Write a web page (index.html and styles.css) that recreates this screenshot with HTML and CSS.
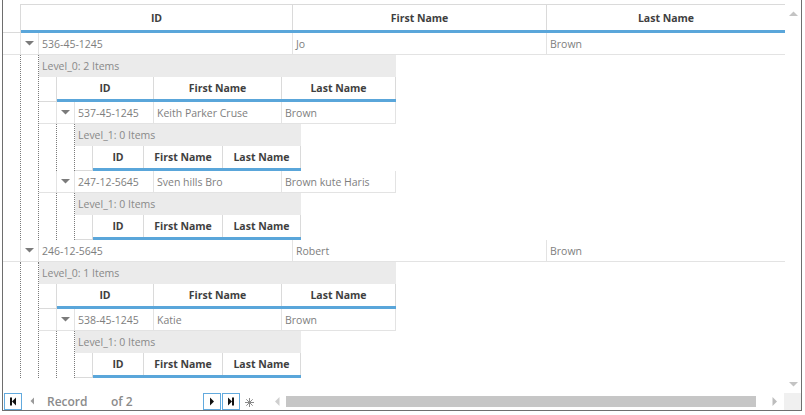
FILE: index.html
```html
<!DOCTYPE html>
<html>
<head>
<meta charset="utf-8">
<title>Grid</title>
<link rel="stylesheet" href="styles.css">
</head>
<body>
<div class="frame">
  <div class="upper">
    <div class="viewport">
      <div class="grid g0">
        <div class="hdr">
          <div class="rh-h"></div>
          <div class="hcols hcols0">
            <div class="h h0 id0">ID</div>
            <div class="h h0 fn0">First Name</div>
            <div class="h h0 ln0 last">Last Name</div>
          </div>
        </div>

        <div class="row">
          <div class="c rh"></div>
          <div class="c exp"><svg width="9" height="5" viewBox="0 0 9 5"><path d="M0 0H9L4.5 4.5Z" fill="#7b7b7b"/></svg></div>
          <div class="c idt0">536-45-1245</div>
          <div class="c fn0">Jo</div>
          <div class="c ln0 last">Brown</div>
        </div>
        <div class="detail">
          <div class="ind"><span></span><span></span></div>
          <div class="grid g1">
            <div class="grp">Level_0: 2 Items</div>
            <div class="hdr">
              <div class="rh-h"></div>
              <div class="hcols">
                <div class="h hn id1">ID</div>
                <div class="h hn fn1">First Name</div>
                <div class="h hn ln1">Last Name</div>
              </div>
            </div>
            <div class="row">
              <div class="c rh"></div>
              <div class="c exp"><svg width="9" height="5" viewBox="0 0 9 5"><path d="M0 0H9L4.5 4.5Z" fill="#7b7b7b"/></svg></div>
              <div class="c idt1">537-45-1245</div>
              <div class="c fn1">Keith Parker Cruse</div>
              <div class="c ln1">Brown</div>
            </div>
            <div class="detail">
              <div class="ind"><span></span><span></span></div>
              <div class="grid g2">
                <div class="grp">Level_1: 0 Items</div>
                <div class="hdr">
                  <div class="rh-h"></div>
                  <div class="hcols">
                    <div class="h hn id2">ID</div>
                    <div class="h hn fn2">First Name</div>
                    <div class="h hn ln2">Last Name</div>
                  </div>
                </div>
              </div>
            </div>
            <div class="row">
              <div class="c rh"></div>
              <div class="c exp"><svg width="9" height="5" viewBox="0 0 9 5"><path d="M0 0H9L4.5 4.5Z" fill="#7b7b7b"/></svg></div>
              <div class="c idt1">247-12-5645</div>
              <div class="c fn1">Sven hills Bro</div>
              <div class="c ln1">Brown kute Haris</div>
            </div>
            <div class="detail">
              <div class="ind"><span></span><span></span></div>
              <div class="grid g2">
                <div class="grp">Level_1: 0 Items</div>
                <div class="hdr">
                  <div class="rh-h"></div>
                  <div class="hcols">
                    <div class="h hn id2">ID</div>
                    <div class="h hn fn2">First Name</div>
                    <div class="h hn ln2">Last Name</div>
                  </div>
                </div>
              </div>
            </div>
          </div>
        </div>

        <div class="row">
          <div class="c rh"></div>
          <div class="c exp"><svg width="9" height="5" viewBox="0 0 9 5"><path d="M0 0H9L4.5 4.5Z" fill="#7b7b7b"/></svg></div>
          <div class="c idt0">246-12-5645</div>
          <div class="c fn0">Robert</div>
          <div class="c ln0 last">Brown</div>
        </div>
        <div class="detail">
          <div class="ind"><span></span><span></span></div>
          <div class="grid g1">
            <div class="grp">Level_0: 1 Items</div>
            <div class="hdr">
              <div class="rh-h"></div>
              <div class="hcols">
                <div class="h hn id1">ID</div>
                <div class="h hn fn1">First Name</div>
                <div class="h hn ln1">Last Name</div>
              </div>
            </div>
            <div class="row">
              <div class="c rh"></div>
              <div class="c exp"><svg width="9" height="5" viewBox="0 0 9 5"><path d="M0 0H9L4.5 4.5Z" fill="#7b7b7b"/></svg></div>
              <div class="c idt1">538-45-1245</div>
              <div class="c fn1">Katie</div>
              <div class="c ln1">Brown</div>
            </div>
            <div class="detail">
              <div class="ind"><span></span><span></span></div>
              <div class="grid g2">
                <div class="grp">Level_1: 0 Items</div>
                <div class="hdr">
                  <div class="rh-h"></div>
                  <div class="hcols">
                    <div class="h hn id2">ID</div>
                    <div class="h hn fn2">First Name</div>
                    <div class="h hn ln2">Last Name</div>
                  </div>
                </div>
              </div>
            </div>
          </div>
        </div>
      </div>
    </div>
    <div class="vscroll">
      <svg width="9" height="5" viewBox="0 0 9 5"><path d="M0 5H9L4.5 0.5Z" fill="#c4c4c4"/></svg>
      <svg width="9" height="5" viewBox="0 0 9 5"><path d="M0 0H9L4.5 4.5Z" fill="#c4c4c4"/></svg>
    </div>
  </div>
  <div class="bottom">
    <div class="nav">
      <div class="btn first">
        <svg width="8" height="9" viewBox="0 0 8 9"><rect x="1" y="0.5" width="2" height="8" fill="#111"/><path d="M7 0.5V8.5L3 4.5Z" fill="#111"/></svg>
      </div>
      <svg class="prev" width="4" height="8" viewBox="0 0 4 8"><path d="M4 0.5V7.5L0.5 4Z" fill="#9a9a9a"/></svg>
      <span class="rec">Record</span>
      <span class="of">of 2</span>
      <div class="btn">
        <svg width="5" height="9" viewBox="0 0 5 9"><path d="M0 0.5V8.5L4 4.5Z" fill="#111"/></svg>
      </div>
      <div class="btn last-btn">
        <svg width="7" height="9" viewBox="0 0 7 9"><path d="M0 0.5V8.5L4 4.5Z" fill="#111"/><rect x="4" y="0.5" width="2" height="8" fill="#111"/></svg>
      </div>
      <svg class="star" width="9" height="9" viewBox="0 0 9 9"><path d="M4.5 0V9M0 4.5H9M1.3 1.3L7.7 7.7M7.7 1.3L1.3 7.7" stroke="#8a8a8a" stroke-width="1"/></svg>
    </div>
    <div class="hscroll">
      <svg class="harr" width="5" height="9" viewBox="0 0 5 9"><path d="M4.5 0V9L0 4.5Z" fill="#cfcfcf"/></svg>
      <div class="thumb"></div>
      <svg class="harr r" width="5" height="9" viewBox="0 0 5 9"><path d="M0.5 0V9L5 4.5Z" fill="#bdbdbd"/></svg>
    </div>
    <div class="corner"></div>
  </div>
</div>
</body>
</html>
```

FILE: styles.css
```css
* { box-sizing: border-box; }
html, body { margin: 0; padding: 0; background: #fff; }
body {
  font-family: "Open Sans", "Liberation Sans", sans-serif;
  font-size: 10.5px;
  color: #7e7e7e;
}
svg { display: block; }

.frame {
  margin-left: 2px;
  width: 800px;
  height: 411px;
  border: 1px solid #6e6e6e;
  border-top: none;
  display: flex;
  flex-direction: column;
}
.upper { height: 392px; display: flex; }
.viewport { width: 782px; padding-top: 4px; overflow: hidden; }
.vscroll {
  width: 16px;
  display: flex;
  flex-direction: column;
  justify-content: space-between;
  align-items: center;
  padding: 11px 0 5px;
}

/* grid */
.grid { display: flex; flex-direction: column; }
.g1 { width: 357px; }
.g2 { width: 226px; }

.hdr { display: flex; }
.rh-h { width: 18px; flex: none; border-right: 1px solid #dadada; border-bottom: 1px solid #dadada; }
.hcols { display: flex; border-bottom: 3px solid #5aa6da; }
.hcols0 { border-top: 1px solid #dadada; }
.h {
  display: flex;
  align-items: center;
  justify-content: center;
  border-right: 1px solid #dadada;
  font-weight: bold;
  color: #3f3f3f;
  white-space: nowrap;
}
.h0 { height: 25px; }
.hn { height: 22px; }
.last { border-right: none !important; }

.row { display: flex; height: 22px; border-bottom: 1px solid #e3e3e3; }
.c {
  display: flex;
  align-items: center;
  padding-left: 3px;
  border-right: 1px solid #e3e3e3;
  white-space: nowrap;
  overflow: hidden;
  flex: none;
}
.rh { width: 18px; padding: 0; }
.exp { width: 18px; padding: 0; justify-content: center; }

.id0 { width: 272px; }
.fn0 { width: 254px; }
.ln0 { width: 238px; }
.idt0 { width: 254px; }
.id1 { width: 97px; }
.fn1 { width: 128px; }
.ln1 { width: 114px; }
.idt1 { width: 79px; }
.id2 { width: 51px; }
.fn2 { width: 79px; }
.ln2 { width: 78px; }

.grp {
  height: 22px;
  background: #ebebeb;
  padding-left: 3px;
  display: flex;
  align-items: center;
  color: #898989;
  white-space: nowrap;
}

.detail { display: flex; }
.ind { display: flex; flex: none; }
.ind span { width: 18px; border-right: 1px dotted #7a7a7a; }

/* bottom bar */
.bottom { height: 18px; display: flex; }
.nav {
  width: 265px;
  display: flex;
  align-items: flex-end;
}
.btn {
  width: 18px;
  height: 17px;
  border: 1px solid #62aade;
  display: flex;
  align-items: center;
  justify-content: center;
  flex: none;
}
.first { margin-left: 1px; }
.prev { margin-left: 8px; margin-bottom: 5px; }
.rec, .of {
  font-size: 12px;
  font-weight: 600;
  color: #8b8b8b;
  line-height: 17px;
  height: 17px;
}
.rec { margin-left: 13px; width: 64px; }
.of { width: 92px; }
.last-btn { margin-left: 1px; }
.star { margin-left: 5px; margin-bottom: 3px; }

.hscroll {
  width: 516px;
  display: flex;
  align-items: center;
  padding-left: 7px;
}
.thumb { width: 470px; height: 11px; background: #c6c6c6; margin-left: 6px; }
.harr.r { margin-left: 16px; }
.corner { width: 17px; height: 17px; margin-top: 1px; background: #f0f0f0; }
```
